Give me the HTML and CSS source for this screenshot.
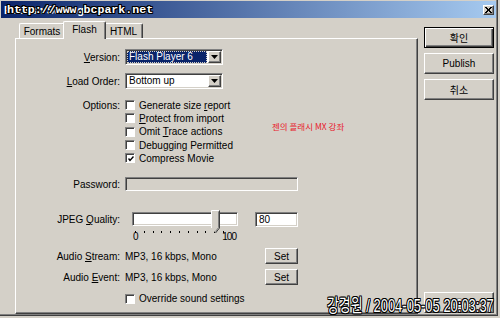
FILE: index.html
```html
<!DOCTYPE html>
<html>

<head>
  <title>Publish Settings</title>
  <meta charset="utf-8" />
  <link rel="stylesheet" href="styles.css">
</head>

<body>
  <div class="window">
    <div class="titlebar">
      <span class="title">Publish Settings</span>
      <span class="close raised">
        <svg width="7" height="6" viewBox="0 0 7 6"><path d="M0 0L6 6M1 0L7 6M6 0L0 6M7 0L1 6" stroke="#000" stroke-width="1"/></svg>
      </span>
    </div>

    <div class="main">
      <div class="tab-area">
        <div class="tabs">
          <span class="tab tab-formats">Formats</span>
          <span class="tab tab-flash active">Flash</span>
          <span class="tab tab-html">HTML</span>
        </div>

        <div class="panel">
          <div class="row row-version">
            <span class="label"><u>V</u>ersion:</span>
            <div class="select">
              <span class="select-text selected">Flash Player 6</span>
              <span class="arrow raised"><svg width="7" height="4" viewBox="0 0 7 4"><path d="M0 0H7L3.5 4Z" fill="#000"/></svg></span>
            </div>
          </div>

          <div class="row row-order">
            <span class="label"><u>L</u>oad Order:</span>
            <div class="select">
              <span class="select-text">Bottom up</span>
              <span class="arrow raised"><svg width="7" height="4" viewBox="0 0 7 4"><path d="M0 0H7L3.5 4Z" fill="#000"/></svg></span>
            </div>
          </div>

          <div class="row row-options">
            <span class="label">Options:</span>
            <div class="options-cell">
              <div class="option-list">
                <div class="option"><span class="check"></span><span>Generate size <u>r</u>eport</span></div>
                <div class="option"><span class="check"></span><span><u>P</u>rotect from import</span></div>
                <div class="option"><span class="check"></span><span>Omit <u>T</u>race actions</span></div>
                <div class="option"><span class="check"></span><span>Debugging Permitted</span></div>
                <div class="option"><span class="check"><svg width="6" height="6" viewBox="0 0 6 6"><path d="M0.5 2.5L2 4.5L5.5 0.5" stroke="#000" stroke-width="1.4" fill="none"/></svg></span><span>Compress Movie</span></div>
              </div>
              <span class="note">젠의 플래시 MX 강좌</span>
            </div>
          </div>

          <div class="row row-password">
            <span class="label">Password:</span>
            <div class="field disabled"></div>
          </div>

          <div class="row row-jpeg">
            <span class="label">JPEG <u>Q</u>uality:</span>
            <div class="jpeg-cell">
              <div class="slider">
                <div class="track"></div>
                <svg class="thumb" width="9" height="24" viewBox="0 0 9 24">
                  <path d="M0.5 0.5H8.5V18L4.5 23L0.5 18Z" fill="#d4d0c8"/>
                  <path d="M0.5 18V0.5H8" stroke="#fff" fill="none"/>
                  <path d="M8.5 0.5V18L4.5 23" stroke="#404040" fill="none"/>
                  <path d="M7.5 1.5V17.5L4.5 21.5" stroke="#808080" fill="none"/>
                </svg>
              </div>
              <div class="field number">80</div>
            </div>
          </div>

          <div class="row row-ticks">
            <span></span>
            <div class="ticks-cell">
              <div class="ticks">
                <i></i><i></i><i></i><i></i><i></i><i></i><i></i><i></i><i></i><i></i><i></i>
              </div>
              <div class="tick-labels"><span>0</span><span>100</span></div>
            </div>
          </div>

          <div class="row row-audio">
            <span class="label">Audio <u>S</u>tream:</span>
            <div class="audio-cell">
              <span class="audio-text">MP3, 16 kbps, Mono</span>
              <button class="btn set-btn">Set</button>
            </div>
          </div>

          <div class="row row-audio row-event">
            <span class="label">Audio <u>E</u>vent:</span>
            <div class="audio-cell">
              <span class="audio-text">MP3, 16 kbps, Mono</span>
              <button class="btn set-btn">Set</button>
            </div>
          </div>

          <div class="row row-override">
            <span></span>
            <div class="option"><span class="check"></span><span>Override sound settings</span></div>
          </div>
        </div>
      </div>

      <div class="buttons">
        <button class="btn default-btn">확인</button>
        <button class="btn">Publish</button>
        <button class="btn">취소</button>
        <button class="btn help-btn">도움말</button>
      </div>
    </div>

    <div class="stamp-url">http://www.bcpark.net</div>
    <div class="stamp-date">강경원 / 2004-05-05 20:03:37</div>
  </div>
</body>

</html>
```

FILE: styles.css
```css
html,
body {
  margin: 0;
  padding: 0;
  background-color: #d4d0c8;
}

body {
  font-family: "Liberation Sans", Arial, "Noto Sans CJK KR", sans-serif;
  font-size: 10px;
  color: #000000;
}

.window {
  position: relative;
  width: 498px;
  height: 316px;
  box-sizing: border-box;
  padding: 1px 2px 2px 1px;
  background: #d4d0c8;
  box-shadow: inset -1px -1px #404040, inset -2px -2px #808080;
  display: flex;
  flex-direction: column;
  overflow: hidden;
}

.raised {
  background: #d4d0c8;
  border: 1px solid;
  border-color: #ffffff #404040 #404040 #ffffff;
  box-shadow: inset -1px -1px #808080;
  box-sizing: border-box;
}

/* title bar */

.titlebar {
  height: 17px;
  flex: none;
  background: linear-gradient(to right, #0a246a, #a6caf0);
  display: flex;
  align-items: center;
  justify-content: space-between;
  padding: 0 2px 0 3px;
}

.title {
  color: #ffffff;
  font-weight: bold;
  font-size: 11px;
}

.close {
  width: 11px;
  height: 10px;
  display: flex;
  align-items: center;
  justify-content: center;
}

/* body */

.main {
  flex: 1;
  display: flex;
  padding: 3px 0 0 14px;
}

.tab-area {
  width: 403px;
  display: flex;
  flex-direction: column;
}

.tabs {
  height: 17px;
  display: flex;
  align-items: flex-end;
  padding-left: 4px;
  position: relative;
  z-index: 1;
}

.tab {
  height: 15px;
  box-sizing: border-box;
  border-top: 1px solid #ffffff;
  border-left: 1px solid #ffffff;
  border-right: 1px solid #404040;
  box-shadow: inset -1px 0 #808080;
  border-radius: 2px 2px 0 0;
  background: #d4d0c8;
  display: flex;
  align-items: center;
  justify-content: center;
}

.tab-formats {
  width: 46px;
}

.tab-flash {
  width: 43px;
  margin-left: -2px;
}

.tab-html {
  width: 39px;
  margin-left: -2px;
}

.tab.active {
  height: 18px;
  margin-bottom: -1px;
  padding-bottom: 3px;
  position: relative;
  z-index: 2;
}

.panel {
  height: 276px;
  box-sizing: border-box;
  border: 1px solid;
  border-color: #ffffff #404040 #404040 #ffffff;
  box-shadow: inset -1px -1px #808080;
  padding-top: 10px;
}

.row {
  display: grid;
  grid-template-columns: 104px 1fr;
  column-gap: 5px;
  align-items: center;
}

.label {
  text-align: right;
}

.row-version,
.row-order {
  height: 16px;
}

.row-order {
  margin-top: 8px;
}

.row-options {
  margin-top: 9.5px;
  align-items: start;
}

.row-options .label {
  line-height: 13.33px;
}

.options-cell {
  display: flex;
}

.option-list {
  width: 120px;
}

.option {
  height: 13.33px;
  display: flex;
  align-items: center;
  gap: 4px;
  white-space: nowrap;
}

.check {
  width: 10px;
  height: 10px;
  box-sizing: border-box;
  border: 1px solid;
  border-color: #808080 #ffffff #ffffff #808080;
  box-shadow: inset 1px 1px #404040;
  background: #ffffff;
  display: flex;
  align-items: center;
  justify-content: center;
  padding: 1px 0 0 1px;
}

.note {
  margin: 22px 0 0 27px;
  font-family: "Noto Sans CJK KR", sans-serif;
  font-size: 8.5px;
  line-height: 10px;
  color: #e8202c;
  white-space: nowrap;
}

/* inputs */

.select {
  width: 98px;
  height: 16px;
  box-sizing: border-box;
  border: 1px solid;
  border-color: #808080 #ffffff #ffffff #808080;
  box-shadow: inset 1px 1px #404040, inset -1px -1px #d4d0c8;
  background: #ffffff;
  padding: 1px;
  display: flex;
}

.select-text {
  flex: 1;
  line-height: 12px;
  padding-left: 2px;
  margin-right: 1px;
}

.select-text.selected {
  background: #0a246a;
  color: #ffffff;
  outline: 1px dotted #d4d0c8;
  outline-offset: -1px;
}

.arrow {
  width: 13px;
  height: 12px;
  display: flex;
  align-items: center;
  justify-content: center;
}

.field {
  box-sizing: border-box;
  border: 1px solid;
  border-color: #808080 #ffffff #ffffff #808080;
  box-shadow: inset 1px 1px #404040, inset -1px -1px #d4d0c8;
  background: #ffffff;
}

.row-password {
  margin-top: 12px;
  height: 14px;
}

.field.disabled {
  width: 173px;
  height: 14px;
  background: #d4d0c8;
}

.row-jpeg {
  margin-top: 20px;
  height: 16px;
}

.row-jpeg .label {
  padding-top: 1px;
}

.jpeg-cell {
  display: flex;
  align-items: center;
}

.slider {
  position: relative;
  width: 106px;
  height: 14px;
  margin-left: 7px;
}

.track {
  height: 14px;
  box-sizing: border-box;
  border: 1px solid;
  border-color: #808080 #ffffff #ffffff #808080;
  box-shadow: inset 1px 1px #404040, inset -1px -1px #d4d0c8;
  background: #ffffff;
}

.thumb {
  position: absolute;
  left: 79px;
  top: -2px;
}

.field.number {
  width: 43px;
  height: 15px;
  margin-left: 17px;
  padding: 1px 0 0 3px;
  line-height: 12px;
}

.row-ticks {
  margin-top: 4px;
  height: 11px;
  align-items: start;
}

.ticks-cell {
  padding-left: 10px;
}

.ticks {
  width: 89px;
  height: 2px;
  display: flex;
  justify-content: space-between;
}

.ticks i {
  width: 1px;
  height: 2px;
  background: #000000;
}

.tick-labels {
  width: 103px;
  margin: -1px 0 0 -2px;
  display: flex;
  justify-content: space-between;
  line-height: 10px;
  letter-spacing: -1px;
}

.row-audio {
  margin-top: 6px;
  height: 16px;
}

.row-event {
  margin-top: 5px;
}

.audio-cell {
  display: flex;
  align-items: center;
}

.audio-text {
  width: 140px;
}

.row-override {
  margin-top: 7px;
}

/* buttons */

.btn {
  font-family: "Liberation Sans", Arial, "Noto Sans CJK KR", sans-serif;
  font-size: 10px;
  color: #000000;
  background: #d4d0c8;
  border: 1px solid;
  border-color: #ffffff #404040 #404040 #ffffff;
  box-shadow: inset -1px -1px #808080;
  padding: 0;
  margin: 0;
  box-sizing: border-box;
}

.set-btn {
  width: 33px;
  height: 16px;
}

.buttons {
  width: 70px;
  margin-left: 6px;
  padding: 6px 0 1px 0;
  display: flex;
  flex-direction: column;
  gap: 5px;
}

.buttons .btn {
  height: 21px;
}

.default-btn {
  border: 1px solid #000000;
  box-shadow: inset 1px 1px #ffffff, inset -1px -1px #404040, inset -2px -2px #808080;
}

.help-btn {
  margin-top: auto;
  color: #808080;
  text-shadow: 1px 1px #ffffff;
}

/* watermarks laid over the capture */

.stamp-url,
.stamp-date {
  position: absolute;
  color: #ffffff;
  font-weight: bold;
  white-space: nowrap;
  text-shadow: 1px 0 #000, -1px 0 #000, 0 1px #000, 0 -1px #000, 1px 1px #000, -1px -1px #000, 1px -1px #000, -1px 1px #000;
}

.stamp-url {
  left: 7px;
  top: 3px;
  font-family: "Liberation Mono", "Courier New", monospace;
  font-size: 11.6px;
  line-height: 14px;
}

.stamp-date {
  right: 4px;
  top: 296px;
  font-family: "Liberation Sans", Arial, "Noto Sans CJK KR", sans-serif;
  font-weight: normal;
  font-size: 18px;
  line-height: 20px;
  transform: scaleX(0.72);
  transform-origin: right top;
}
```
